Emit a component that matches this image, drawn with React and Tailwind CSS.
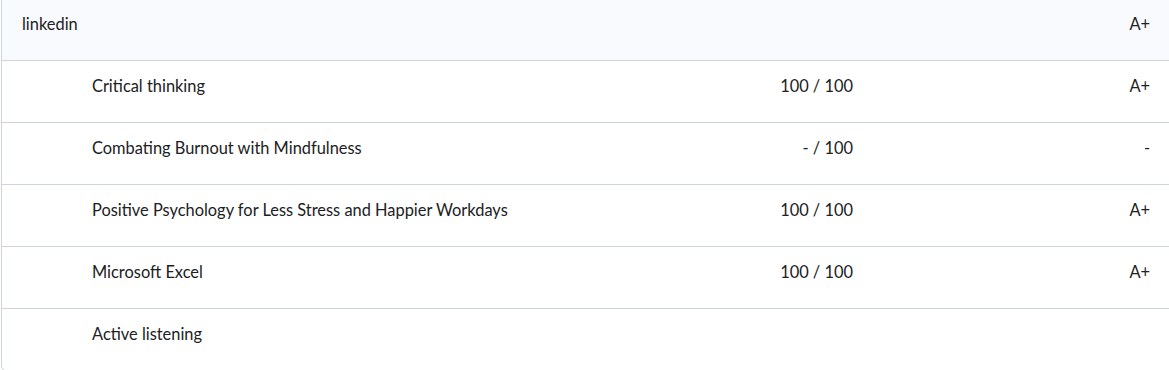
import React from "react";

const rows = [
  { name: "Critical thinking", score: "100 / 100", grade: "A+" },
  { name: "Combating Burnout with Mindfulness", score: "- / 100", grade: "-" },
  { name: "Positive Psychology for Less Stress and Happier Workdays", score: "100 / 100", grade: "A+" },
  { name: "Microsoft Excel", score: "100 / 100", grade: "A+" },
  { name: "Active listening", score: "", grade: "" },
];

export default function App() {
  return (
    <div className="w-[1169px] h-[370px] overflow-hidden bg-white" style={{ fontFamily: "Lato, 'Noto Sans', sans-serif" }}>
      <div className="ml-px w-[1172px] border-l border-r border-b border-[#cdd5dc] rounded-b-[5px] text-[16.4px] text-[#202122]">
        <div className="flex h-[61px] bg-[#f9fafe] border-b border-[#cdd5dc] pt-[12px] pl-[20px] pr-[22px]">
          <div className="flex-1 leading-[24px]">linkedin</div>
          <div className="w-[297px] text-right leading-[24px]">A+</div>
        </div>
        {rows.map((r, i) => {
          const last = i === rows.length - 1;
          return (
            <div
              key={i}
              className={
                last
                  ? "flex h-[61px] pt-[13px] pl-[90px] pr-[22px]"
                  : "flex h-[62px] pt-[13px] pl-[90px] pr-[22px] border-b border-[#cdd5dc]"
              }
            >
              <div className="flex-1 leading-[24px]">{r.name}</div>
              <div className="text-right leading-[24px]">{r.score}</div>
              <div className="w-[297px] text-right leading-[24px]">{r.grade}</div>
            </div>
          );
        })}
      </div>
    </div>
  );
}
